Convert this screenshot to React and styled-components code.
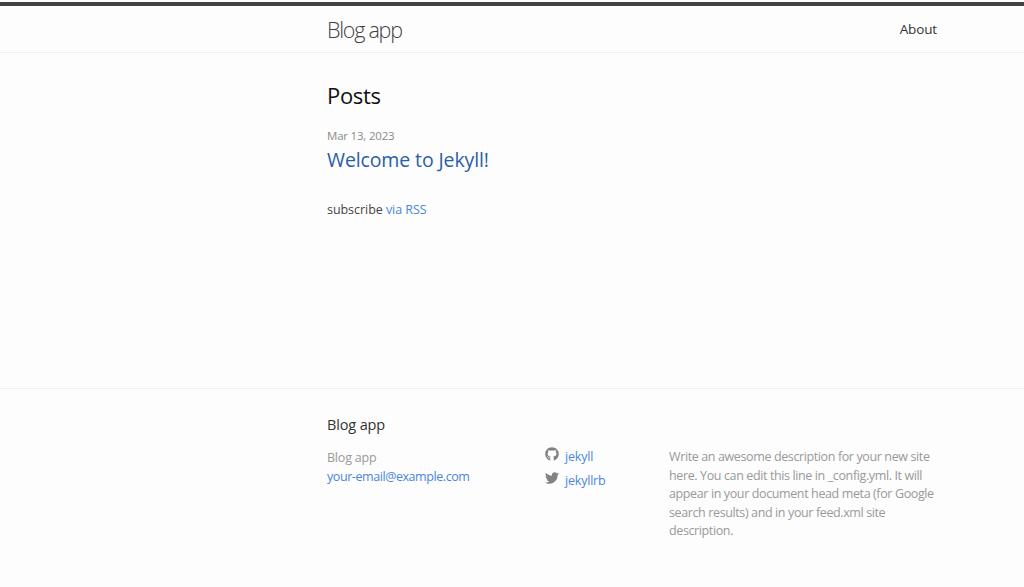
import React from "react";
import styled, { createGlobalStyle } from "styled-components";
import { FaGithub, FaTwitter } from "react-icons/fa";

const Global = createGlobalStyle`
  html, body { margin: 0; padding: 0; background: #fdfdfd; }
  body { font-family: "Open Sans", "Noto Sans", sans-serif; color: #111; }
  a { text-decoration: none; }
`;

const Page = styled.div`
  height: 587px;
  display: flex;
  flex-direction: column;
  padding-top: 2px;
  box-sizing: border-box;
  overflow: hidden;
`;

const Wrapper = styled.div`
  width: 610px;
  margin-left: 327px;
`;

const Header = styled.header`
  border-top: 4px solid #424242;
  border-bottom: 1px solid #f0f0f0;
  height: 46px;
  flex: none;
`;

const HeaderRow = styled(Wrapper)`
  display: flex;
  justify-content: space-between;
  align-items: center;
  height: 46px;
`;

const SiteTitle = styled.a`
  font-size: 21.5px;
  font-weight: 300;
  letter-spacing: -1.25px;
  color: #424242;
`;

const NavLink = styled.a`
  font-size: 13.5px;
  letter-spacing: -0.15px;
  color: #333;
`;

const Main = styled.main`
  flex: 1;
  padding-top: 27px;
`;

const Heading = styled.h1`
  margin: 0 0 17px;
  font-size: 22px;
  font-weight: 400;
  line-height: 31px;
  letter-spacing: -0.35px;
  color: #111;
`;

const PostDate = styled.div`
  font-size: 11.5px;
  line-height: 16px;
  letter-spacing: -0.2px;
  color: #8a8a8a;
`;

const PostTitle = styled.a`
  display: block;
  font-size: 19.5px;
  line-height: 32px;
  letter-spacing: -0.12px;
  color: #2a5ea8;
`;

const Subscribe = styled.p`
  margin: 24px 0 0;
  font-size: 12.5px;
  line-height: 20px;
  letter-spacing: -0.05px;
  color: #444;
`;

const TextLink = styled.a`
  color: #4a86e0;
`;

const Footer = styled.footer`
  flex: none;
  height: 199px;
  border-top: 1px solid #f0f0f0;
  padding-top: 26px;
  box-sizing: border-box;
`;

const FooterHeading = styled.h2`
  margin: 0 0 13px;
  font-size: 14.5px;
  font-weight: 400;
  line-height: 20px;
  letter-spacing: -0.15px;
  color: #333;
`;

const Columns = styled.div`
  display: grid;
  grid-template-columns: 218px 124px 1fr;
`;

const Stack = styled.div`
  font-size: 12.5px;
  line-height: 19px;
  letter-spacing: -0.2px;
  color: #999;
`;

const EmailLink = styled(TextLink)`
  letter-spacing: -0.43px;
`;

const Social = styled.ul`
  margin: -2px 0 0;
  padding: 0;
  list-style: none;
`;

const SocialItem = styled.li`
  display: flex;
  align-items: flex-start;
  gap: 6px;
  height: 24px;
  font-size: 12.5px;
  line-height: 22px;
  letter-spacing: -0.2px;
  svg { color: #828282; font-size: 14px; margin-top: 1px; }
`;

const Description = styled.p`
  margin: 0;
  font-size: 12.5px;
  line-height: 18.6px;
  letter-spacing: -0.38px;
  color: #999;
`;

export default function App() {
  return (
    <Page>
      <Global />
      <Header>
        <HeaderRow>
          <SiteTitle href="#">Blog app</SiteTitle>
          <NavLink href="#">About</NavLink>
        </HeaderRow>
      </Header>
      <Main>
        <Wrapper>
          <Heading>Posts</Heading>
          <PostDate>Mar 13, 2023</PostDate>
          <PostTitle href="#">Welcome to Jekyll!</PostTitle>
          <Subscribe>subscribe <TextLink href="#">via RSS</TextLink></Subscribe>
        </Wrapper>
      </Main>
      <Footer>
        <Wrapper>
          <FooterHeading>Blog app</FooterHeading>
          <Columns>
            <Stack>
              <div>Blog app</div>
              <EmailLink href="#">your-email@example.com</EmailLink>
            </Stack>
            <Social>
              <SocialItem><FaGithub /><TextLink href="#">jekyll</TextLink></SocialItem>
              <SocialItem><FaTwitter /><TextLink href="#">jekyllrb</TextLink></SocialItem>
            </Social>
            <Description>Write an awesome description for your new site here. You can edit this line in _config.yml. It will appear in your document head meta (for Google search results) and in your feed.xml site description.</Description>
          </Columns>
        </Wrapper>
      </Footer>
    </Page>
  );
}
